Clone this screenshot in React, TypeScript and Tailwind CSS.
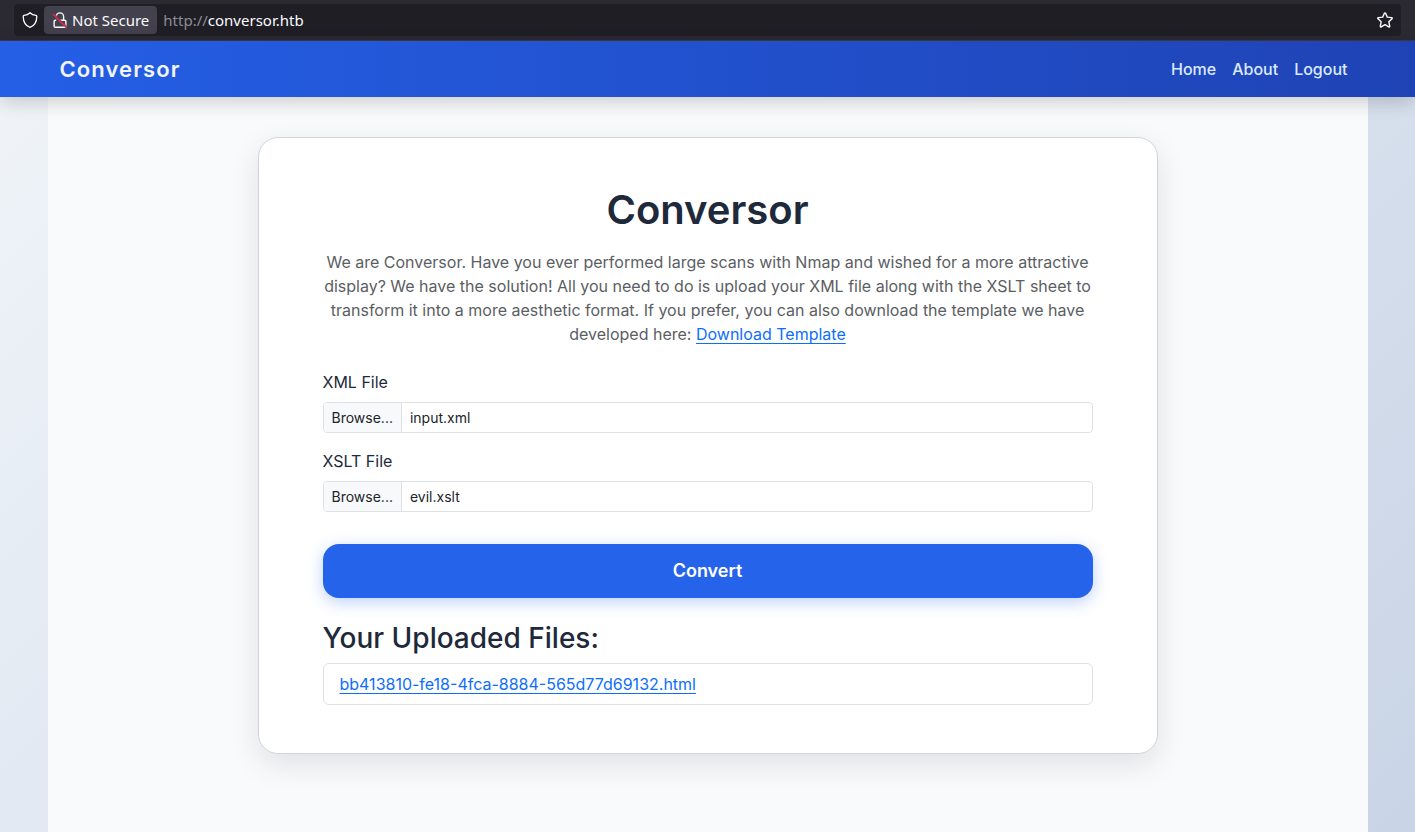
import { useRef, useState } from "react";

const navLinks = ["Home", "About", "Logout"];

const uploadedFiles = ["bb413810-fe18-4fca-8884-565d77d69132.html"];

function ShieldIcon() {
  return (
    <svg width="16" height="16" viewBox="0 0 16 16" fill="none" stroke="#fbfbfe" strokeWidth="1.3" strokeLinejoin="round">
      <path d="M8 .8C9.6 2.3 12 3.2 14 3.4c.6.1.8.5.8 1C14.7 10 12.4 13.7 8 15.3 3.6 13.7 1.3 10 1.2 4.4c0-.5.2-.9.8-1C4 3.2 6.4 2.3 8 .8z" />
    </svg>
  );
}

function InsecureLockIcon() {
  return (
    <svg width="16" height="16" viewBox="0 0 16 16" fill="none" stroke="#fbfbfe" strokeWidth="1.4">
      <path d="M4.2 4.6a3.7 3.7 0 0 1 7.4 0V8" />
      <path d="M4.2 8.3H3.4A1.3 1.3 0 0 0 2.1 9.6v4.3a1.3 1.3 0 0 0 1.3 1.3h9.2a1.3 1.3 0 0 0 1.3-1.3V9.600a1.3 1.3 0 0 0-1.3-1.3H7.8" />
      <path d="M2 1.600 15.200 14.800" stroke="#42414d" strokeWidth="1" />
      <path d="M1 2 14.400 15.400" stroke="#e22850" strokeWidth="1.5" />
    </svg>
  );
}

function StarIcon() {
  return (
    <svg width="16" height="16" viewBox="0 0 16 16" fill="none" stroke="#fbfbfe" strokeWidth="1.4" strokeLinejoin="round">
      <path d="M7.4 1.2a.7.7 0 0 1 1.2 0l1.7 3.9 4.3.5a.6.6 0 0 1 .4 1.1l-3.2 3 .9 4.5a.6.6 0 0 1-.9.7L8 12.6l-3.8 2.3a.6.6 0 0 1-.9-.7l.9-4.5L1 6.7a.6.6 0 0 1 .4-1.1l4.3-.5z" />
    </svg>
  );
}

function FileField({ id, label, initialName }: { id: string; label: string; initialName: string }) {
  const inputRef = useRef<HTMLInputElement>(null);
  const [fileName, setFileName] = useState(initialName);

  return (
    <div className="mb-4">
      <label htmlFor={id} className="mb-2 block">
        {label}
      </label>
      <div className="relative flex h-[31px] overflow-hidden rounded border border-[#dee2e6] bg-white text-sm text-[#212529]">
        <input
          ref={inputRef}
          id={id}
          type="file"
          className="sr-only"
          onChange={(e) => setFileName(e.target.files?.[0]?.name ?? "")}
        />
        <button
          type="button"
          onClick={() => inputRef.current?.click()}
          className="border-r border-[#dee2e6] bg-[#f8f9fa] px-2"
        >
          Browse...
        </button>
        <span className="flex items-center px-2">{fileName}</span>
      </div>
    </div>
  );
}

export default function App() {
  return (
    <div className="flex min-h-screen flex-col bg-linear-135 from-[#f1f5f9] to-[#c9d4e6] font-['Inter',sans-serif] text-base text-[#1e293b]">
      <div className="flex h-[41px] border-b border-[#3c3b42] bg-[#2b2a33] px-[14px] py-1 font-['Noto_Sans',sans-serif] text-[15px] text-[#fbfbfe]">
        <div className="flex h-8 flex-1 items-center rounded bg-[#1f1e25] px-2">
          <ShieldIcon />
          <button type="button" className="ml-1.5 flex h-7 items-center gap-1 rounded bg-[#42414d] px-2">
            <InsecureLockIcon />
            Not Secure
          </button>
          <span className="ml-1.5 flex-1">
            <span className="text-[#8c8c92]">http://</span>conversor.htb
          </span>
          <button type="button" aria-label="Bookmark this page">
            <StarIcon />
          </button>
        </div>
      </div>

      <nav className="z-10 h-14 bg-linear-90 from-[#245fe6] to-[#1f43b5] shadow-[0_4px_20px_rgba(0,0,0,0.2)]">
        <div className="mx-auto flex h-full max-w-[1320px] items-center justify-between px-3">
          <a href="#" className="text-[22px] font-semibold tracking-wider text-[#f1f5f9]">
            Conversor
          </a>
          <div className="flex gap-4 px-2 font-medium text-[#dbeafe]">
            {navLinks.map((link) => (
              <a key={link} href="#">
                {link}
              </a>
            ))}
          </div>
        </div>
      </nav>

      <main className="mx-auto w-full max-w-[1320px] flex-1 bg-[#f9fafc] px-3 py-10">
        <section className="mx-auto max-w-[900px] rounded-[20px] border border-[#d1d5db] bg-white px-16 py-12 shadow-[0_10px_30px_rgba(0,0,0,0.1)]">
          <h1 className="mb-4 text-center text-[40px] leading-12 font-semibold">Conversor</h1>
          <p className="mb-6 text-center text-[#5b5e63]">
            We are Conversor. Have you ever performed large scans with Nmap and wished for a more attractive display? We
            have the solution! All you need to do is upload your XML file along with the XSLT sheet to transform it into
            a more aesthetic format. If you prefer, you can also download the template we have developed here:{" "}
            <a href="#" className="text-[#0d6efd] underline underline-offset-3">
              Download Template
            </a>
          </p>

          <form onSubmit={(e) => e.preventDefault()}>
            <FileField id="xml-file" label="XML File" initialName="input.xml" />
            <FileField id="xslt-file" label="XSLT File" initialName="evil.xslt" />
            <button
              type="submit"
              className="mt-4 h-[54px] w-full rounded-2xl bg-[#2563eb] text-lg font-semibold text-white shadow-[0_4px_16px_rgba(37,99,235,0.3)]"
            >
              Convert
            </button>
          </form>

          <h2 className="mt-6 mb-2 text-[28px] leading-[33px] font-medium">Your Uploaded Files:</h2>
          <ul className="rounded-md border border-[#dee2e6]">
            {uploadedFiles.map((file) => (
              <li key={file} className="px-4 py-2">
                <a href="#" className="text-[#0d6efd] underline underline-offset-3">
                  {file}
                </a>
              </li>
            ))}
          </ul>
        </section>
      </main>
    </div>
  );
}
